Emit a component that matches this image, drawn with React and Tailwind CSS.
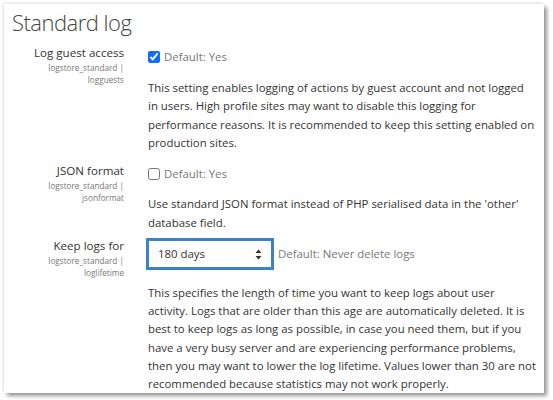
import React from "react";

function Label({ title, a, b }) {
  return (
    <div className="w-[120px] shrink-0 text-right">
      <div className="text-[11.6px] leading-[16px] text-[#333]">{title}</div>
      <div className="mt-[1px] text-[8.2px] leading-[12px] text-[#777]">{a}</div>
      <div className="text-[8.2px] leading-[12px] text-[#777]">{b}</div>
    </div>
  );
}

export default function App() {
  return (
    <div className="w-[553px] h-[400px] bg-white overflow-hidden" style={{ fontFamily: '"Open Sans", "Noto Sans", sans-serif' }}>
      <div className="ml-[4px] mt-[4px] w-[540px] h-[389px] bg-white overflow-hidden shadow-[3px_3px_4px_rgba(0,0,0,0.4),-1px_-1px_3px_rgba(0,0,0,0.12)]">
        <h3 className="pl-[8px] pt-[2px] text-[22px] leading-[32px] font-light tracking-[-0.5px] text-[#444]">Standard log</h3>
        <div className="flex flex-col">
          <div className="flex gap-[24px] mt-[7px]">
            <Label title="Log guest access" a="logstore_standard |" b="logguests" />
            <div className="w-[388px] text-[11.4px] leading-[18.5px] text-[#333]">
              <label className="flex items-center gap-[4px] mt-[3px] text-[#777]">
                <input type="checkbox" defaultChecked className="m-0 w-[12px] h-[12px] accent-[#0d6efd]" />
                <span>Default: Yes</span>
              </label>
              <p className="mt-[12px]">
                This setting enables logging of actions by guest account and not logged in users. High profile sites may want to disable this logging for performance reasons. It is recommended to keep this setting enabled on production sites.
              </p>
            </div>
          </div>
          <div className="flex gap-[24px] mt-[10px]">
            <Label title="JSON format" a="logstore_standard |" b="jsonformat" />
            <div className="w-[388px] text-[11.4px] leading-[18.5px] text-[#333]">
              <label className="flex items-center gap-[4px] mt-[2px] text-[#777]">
                <input type="checkbox" className="m-0 w-[12px] h-[12px]" />
                <span>Default: Yes</span>
              </label>
              <p className="mt-[12px]">
                Use standard JSON format instead of PHP serialised data in the 'other' database field.
              </p>
            </div>
          </div>
          <div className="flex gap-[24px] mt-[6px]">
            <Label title="Keep logs for" a="logstore_standard |" b="loglifetime" />
            <div className="w-[388px] text-[11.4px] leading-[18.5px] text-[#333]">
              <div className="flex items-center gap-[4px] -ml-[2px]">
                <div className="w-[128px] h-[32px] border-[3px] border-[#3b82c8] flex items-center justify-between pl-[9px] pr-[9px] bg-white">
                  <span className="text-[#333]">180 days</span>
                  <svg width="7" height="11" viewBox="0 0 7 11"><path d="M3.5 0.5 L6.5 4 H0.5 Z M3.5 10.5 L6.5 7 H0.5 Z" fill="#333" /></svg>
                </div>
                <span className="text-[#777]">Default: Never delete logs</span>
              </div>
              <p className="mt-[14px] leading-[18.2px]">
                This specifies the length of time you want to keep logs about user activity. Logs that are older than this age are automatically deleted. It is best to keep logs as long as possible, in case you need them, but if you have a very busy server and are experiencing performance problems, then you may want to lower the log lifetime. Values lower than 30 are not recommended because statistics may not work properly.
              </p>
            </div>
          </div>
        </div>
      </div>
    </div>
  );
}
